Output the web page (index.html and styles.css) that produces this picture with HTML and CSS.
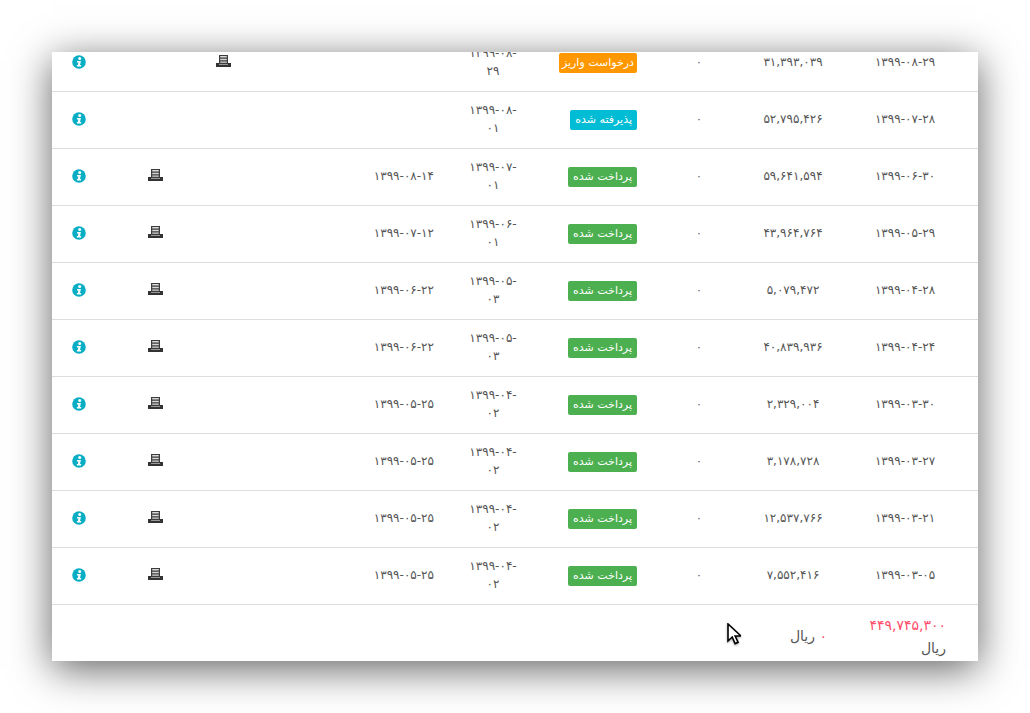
FILE: index.html
```html
<!DOCTYPE html>
<html lang="fa" dir="rtl">
<head>
<meta charset="utf-8">
<title>فهرست</title>
<link rel="stylesheet" href="styles.css">
</head>
<body>
<svg class="defs" width="0" height="0" aria-hidden="true">
  <symbol id="info" viewBox="0 0 14 14">
    <circle cx="7" cy="7" r="6.8" fill="#0aaec4"/>
    <circle cx="7.7" cy="3.6" r="1.5" fill="#fff"/>
    <path d="M5 6h3.9l-.9 4.1h1.1v1.4H4.9v-1.4h.9l.6-2.7H5z" fill="#fff"/>
  </symbol>
  <symbol id="print" viewBox="0 0 15 12">
    <path d="M3 0h9v9H3z" fill="#3c3c3c"/>
    <path d="M4.2 1h6.6v1.6H4.2zM4.2 3.8h6.6v1.4H4.2zM4.2 6.4h6.6v1.4H4.2z" fill="#d8d8d8"/>
    <path d="M0 8h3v1.6h9V8h3v4H0z" fill="#333"/>
  </symbol>
</svg>
<main class="window">
  <table class="grid">
    <tbody>
      <tr>
        <td class="c1">۱۳۹۹-۰۸-۲۹</td><td class="c2">۳۱,۳۹۳,۰۳۹</td><td class="c3">۰</td>
        <td class="c4"><span class="badge orange">درخواست واریز</span></td>
        <td class="c5">۱۳۹۹-۰۸-<wbr>۲۹</td><td class="c6"></td>
        <td class="c7"><svg class="ico-print"><use href="#print"/></svg></td><td class="c8"></td>
        <td class="c9"><svg class="ico-info"><use href="#info"/></svg></td>
      </tr>
      <tr>
        <td class="c1">۱۳۹۹-۰۷-۲۸</td><td class="c2">۵۲,۷۹۵,۴۲۶</td><td class="c3">۰</td>
        <td class="c4"><span class="badge cyan">پذیرفته شده</span></td>
        <td class="c5">۱۳۹۹-۰۸-<wbr>۰۱</td><td class="c6"></td>
        <td class="c7"></td><td class="c8"></td>
        <td class="c9"><svg class="ico-info"><use href="#info"/></svg></td>
      </tr>
      <tr>
        <td class="c1">۱۳۹۹-۰۶-۳۰</td><td class="c2">۵۹,۶۴۱,۵۹۴</td><td class="c3">۰</td>
        <td class="c4"><span class="badge green">پرداخت شده</span></td>
        <td class="c5">۱۳۹۹-۰۷-<wbr>۰۱</td><td class="c6">۱۳۹۹-۰۸-۱۴</td>
        <td class="c7"></td><td class="c8"><svg class="ico-print"><use href="#print"/></svg></td>
        <td class="c9"><svg class="ico-info"><use href="#info"/></svg></td>
      </tr>
      <tr>
        <td class="c1">۱۳۹۹-۰۵-۲۹</td><td class="c2">۴۳,۹۶۴,۷۶۴</td><td class="c3">۰</td>
        <td class="c4"><span class="badge green">پرداخت شده</span></td>
        <td class="c5">۱۳۹۹-۰۶-<wbr>۰۱</td><td class="c6">۱۳۹۹-۰۷-۱۲</td>
        <td class="c7"></td><td class="c8"><svg class="ico-print"><use href="#print"/></svg></td>
        <td class="c9"><svg class="ico-info"><use href="#info"/></svg></td>
      </tr>
      <tr>
        <td class="c1">۱۳۹۹-۰۴-۲۸</td><td class="c2">۵,۰۷۹,۴۷۲</td><td class="c3">۰</td>
        <td class="c4"><span class="badge green">پرداخت شده</span></td>
        <td class="c5">۱۳۹۹-۰۵-<wbr>۰۳</td><td class="c6">۱۳۹۹-۰۶-۲۲</td>
        <td class="c7"></td><td class="c8"><svg class="ico-print"><use href="#print"/></svg></td>
        <td class="c9"><svg class="ico-info"><use href="#info"/></svg></td>
      </tr>
      <tr>
        <td class="c1">۱۳۹۹-۰۴-۲۴</td><td class="c2">۴۰,۸۳۹,۹۳۶</td><td class="c3">۰</td>
        <td class="c4"><span class="badge green">پرداخت شده</span></td>
        <td class="c5">۱۳۹۹-۰۵-<wbr>۰۳</td><td class="c6">۱۳۹۹-۰۶-۲۲</td>
        <td class="c7"></td><td class="c8"><svg class="ico-print"><use href="#print"/></svg></td>
        <td class="c9"><svg class="ico-info"><use href="#info"/></svg></td>
      </tr>
      <tr>
        <td class="c1">۱۳۹۹-۰۳-۳۰</td><td class="c2">۲,۳۲۹,۰۰۴</td><td class="c3">۰</td>
        <td class="c4"><span class="badge green">پرداخت شده</span></td>
        <td class="c5">۱۳۹۹-۰۴-<wbr>۰۲</td><td class="c6">۱۳۹۹-۰۵-۲۵</td>
        <td class="c7"></td><td class="c8"><svg class="ico-print"><use href="#print"/></svg></td>
        <td class="c9"><svg class="ico-info"><use href="#info"/></svg></td>
      </tr>
      <tr>
        <td class="c1">۱۳۹۹-۰۳-۲۷</td><td class="c2">۳,۱۷۸,۷۲۸</td><td class="c3">۰</td>
        <td class="c4"><span class="badge green">پرداخت شده</span></td>
        <td class="c5">۱۳۹۹-۰۴-<wbr>۰۲</td><td class="c6">۱۳۹۹-۰۵-۲۵</td>
        <td class="c7"></td><td class="c8"><svg class="ico-print"><use href="#print"/></svg></td>
        <td class="c9"><svg class="ico-info"><use href="#info"/></svg></td>
      </tr>
      <tr>
        <td class="c1">۱۳۹۹-۰۳-۲۱</td><td class="c2">۱۲,۵۳۷,۷۶۶</td><td class="c3">۰</td>
        <td class="c4"><span class="badge green">پرداخت شده</span></td>
        <td class="c5">۱۳۹۹-۰۴-<wbr>۰۲</td><td class="c6">۱۳۹۹-۰۵-۲۵</td>
        <td class="c7"></td><td class="c8"><svg class="ico-print"><use href="#print"/></svg></td>
        <td class="c9"><svg class="ico-info"><use href="#info"/></svg></td>
      </tr>
      <tr>
        <td class="c1">۱۳۹۹-۰۳-۰۵</td><td class="c2">۷,۵۵۲,۴۱۶</td><td class="c3">۰</td>
        <td class="c4"><span class="badge green">پرداخت شده</span></td>
        <td class="c5">۱۳۹۹-۰۴-<wbr>۰۲</td><td class="c6">۱۳۹۹-۰۵-۲۵</td>
        <td class="c7"></td><td class="c8"><svg class="ico-print"><use href="#print"/></svg></td>
        <td class="c9"><svg class="ico-info"><use href="#info"/></svg></td>
      </tr>
    </tbody>
    <tfoot>
      <tr>
        <td class="c1 total"><span class="red">۴۴۹,۷۴۵,۳۰۰</span> ریال</td>
        <td class="c2 total"><span class="red">۰</span> ریال</td>
        <td colspan="7"></td>
      </tr>
    </tfoot>
  </table>
</main>
<svg class="cursor" viewBox="0 0 14 22" aria-hidden="true">
  <path d="M1 1v17l4.2-4 2.9 6.6 3-1.3-2.9-6.3H14z" fill="#fff" stroke="#000" stroke-width="1.6"/>
</svg>
</body>
</html>
```
FILE: styles.css
```css
* { box-sizing: border-box; }
html, body { margin: 0; height: 100%; background: #fff; }
body {
  padding: 52px;
  font-family: "DejaVu Sans", sans-serif;
  font-size: 12px;
  color: #555;
  overflow: hidden;
}
.defs { position: absolute; }
.window {
  width: 926px;
  height: 609px;
  background: #fff;
  overflow: hidden;
  box-shadow: 0 8px 38px rgba(0,0,0,.62);
}
.grid {
  width: 926px;
  margin-top: -17px;
  table-layout: fixed;
  border-collapse: collapse;
}
.grid td {
  height: 57px;
  padding: 0;
  line-height: 18px;
  text-align: center;
  vertical-align: middle;
  border-bottom: 1px solid #ddd;
}
.grid tbody tr:first-child td { height: 56px; }
.grid tfoot td { height: 65px; border-bottom: 0; line-height: 23px; font-size: 14px; }
.c1 { width: 128px; }
.grid td.c1 { padding: 0 32px 2px 14px; letter-spacing: -.4px; }
.c2 { width: 114px; }
.grid td.c2 { padding: 0 23px 2px; letter-spacing: -.3px; }
.c3 { width: 74px; font-size: 11px; }
.c4 { width: 122px; }
.grid td.c4 { padding-right: 25px; text-align: right; }
.c5 { width: 94px; }
.grid td.c5 { padding: 0 22px 2px; letter-spacing: -.4px; }
.c6 { width: 186px; }
.grid td.c6 { padding: 0 12px 2px 0; text-align: right; letter-spacing: -.4px; }
.c7 { width: 74px; }
.c8 { width: 62px; }
.c9 { width: 72px; }
.grid td.c9 { padding-right: 18px; }
.grid td.total { padding-bottom: 0; text-align: right; letter-spacing: 0; }
.red { color: #ff4d6a; }
.badge {
  display: inline-block;
  height: 20px;
  padding: 0 5px;
  border-radius: 2px;
  color: #fff;
  font-size: 11px;
  line-height: 20px;
  vertical-align: middle;
}
.orange { padding: 0 3px; background: #ff9800; }
.cyan { background: #00bcd4; }
.green { background: #4caf50; }
.ico-info { display: block; width: 14px; height: 14px; margin: -2px auto 0; }
.ico-print { display: block; width: 15px; height: 12px; margin: -3px auto 0; }
.cursor {
  position: absolute;
  left: 727px;
  top: 623px;
  width: 14px;
  height: 22px;
  filter: drop-shadow(0 1px 1px rgba(0,0,0,.35));
}
```
